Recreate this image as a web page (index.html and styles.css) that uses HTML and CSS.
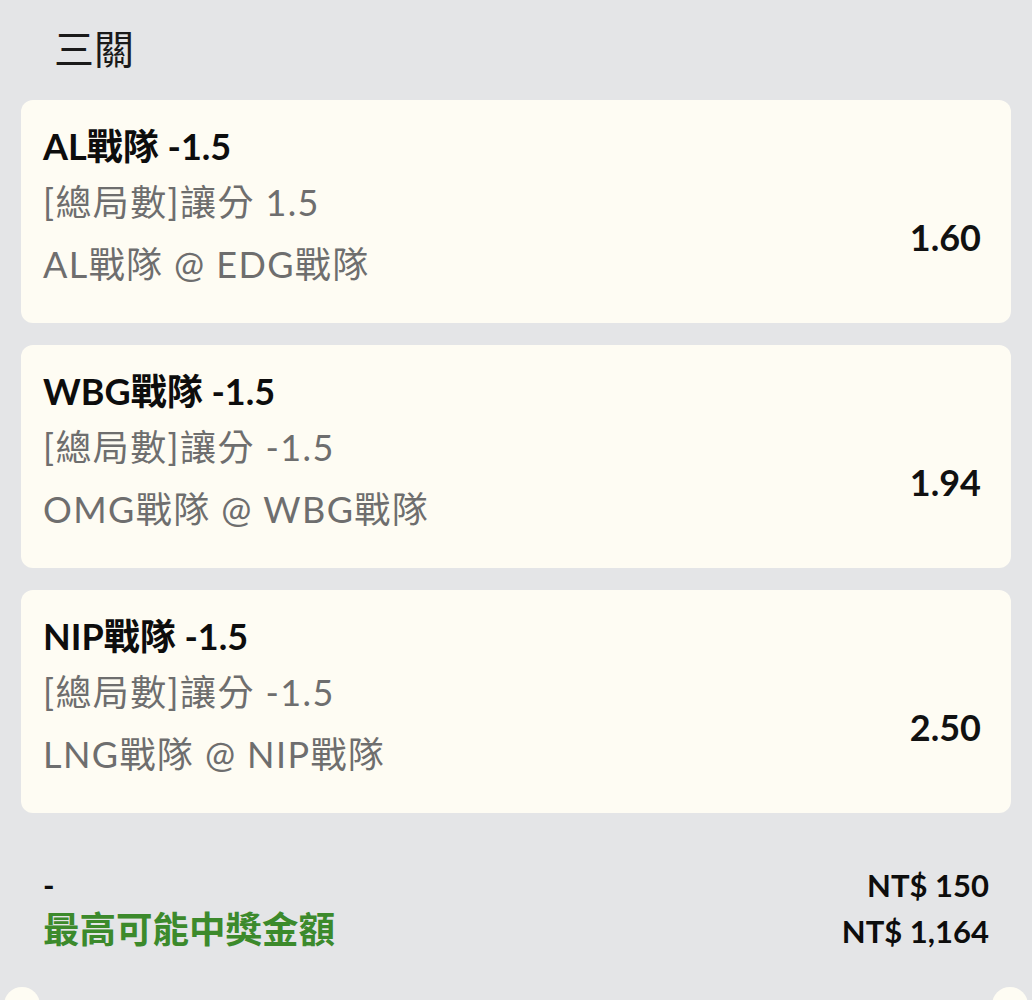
FILE: index.html
```html
<!DOCTYPE html>
<html lang="zh-Hant">
<head>
<meta charset="utf-8">
<link rel="stylesheet" href="styles.css">
</head>
<body>
<div class="page">
  <div class="title">三關</div>
  <div class="card">
    <div class="info">
      <div class="pick">AL戰隊 -1.5</div>
      <div class="market">[總局數]讓分 1.5</div>
      <div class="match">AL戰隊 @ EDG戰隊</div>
    </div>
    <div class="odds">1.60</div>
  </div>
  <div class="card">
    <div class="info">
      <div class="pick">WBG戰隊 -1.5</div>
      <div class="market">[總局數]讓分 -1.5</div>
      <div class="match">OMG戰隊 @ WBG戰隊</div>
    </div>
    <div class="odds">1.94</div>
  </div>
  <div class="card">
    <div class="info">
      <div class="pick">NIP戰隊 -1.5</div>
      <div class="market">[總局數]讓分 -1.5</div>
      <div class="match">LNG戰隊 @ NIP戰隊</div>
    </div>
    <div class="odds">2.50</div>
  </div>
  <div class="summary">
    <div class="row">
      <span class="dash">-</span>
      <span class="amount">NT$ 150</span>
    </div>
    <div class="row">
      <span class="label">最高可能中獎金額</span>
      <span class="amount">NT$ 1,164</span>
    </div>
  </div>
  <div class="notches">
    <span class="notch"></span>
    <span class="notch"></span>
  </div>
</div>
</body>
</html>
```
FILE: styles.css
```css
html, body {
  margin: 0;
  padding: 0;
  background: #e4e5e7;
  overflow: hidden;
}
body {
  font-family: Lato, "Noto Sans CJK TC", "Noto Sans", sans-serif;
  color: #111;
}
.page {
  padding: 19px 21px 0;
  display: flex;
  flex-direction: column;
}
.title {
  font-size: 40px;
  line-height: 60px;
  height: 60px;
  padding-left: 33px;
  margin-bottom: 21px;
  color: #1a1a1a;
}
.card {
  background: #fefcf3;
  border-radius: 12px;
  padding: 20px 30px 27px 22px;
  display: flex;
  justify-content: space-between;
  margin-bottom: 22px;
}
.info {
  display: flex;
  flex-direction: column;
}
.pick {
  font-size: 36px;
  font-weight: 700;
  line-height: 52px;
  height: 52px;
  color: #0d0d0d;
}
.market, .match {
  font-size: 36px;
  line-height: 60px;
  height: 60px;
  color: #6e6e6e;
  letter-spacing: 1.4px;
}
.match {
  line-height: 64px;
  height: 64px;
}
.odds {
  align-self: center;
  margin-top: 58px;
  font-size: 36px;
  font-weight: 700;
  line-height: 40px;
  color: #111;
}
.summary {
  margin-top: 28px;
  padding: 0 22px;
  display: flex;
  flex-direction: column;
}
.row {
  display: flex;
  justify-content: space-between;
  align-items: baseline;
  height: 44px;
  line-height: 44px;
}
.dash, .amount {
  font-size: 31px;
  font-weight: 700;
  color: #0d0d0d;
}
.label {
  font-size: 36.5px;
  font-weight: 700;
  color: #3c8a2c;
}
.notches {
  display: flex;
  justify-content: space-between;
  margin: 36px -17px 0;
}
.notch {
  width: 36px;
  height: 36px;
  border-radius: 50%;
  background: #fefcf3;
}
```
